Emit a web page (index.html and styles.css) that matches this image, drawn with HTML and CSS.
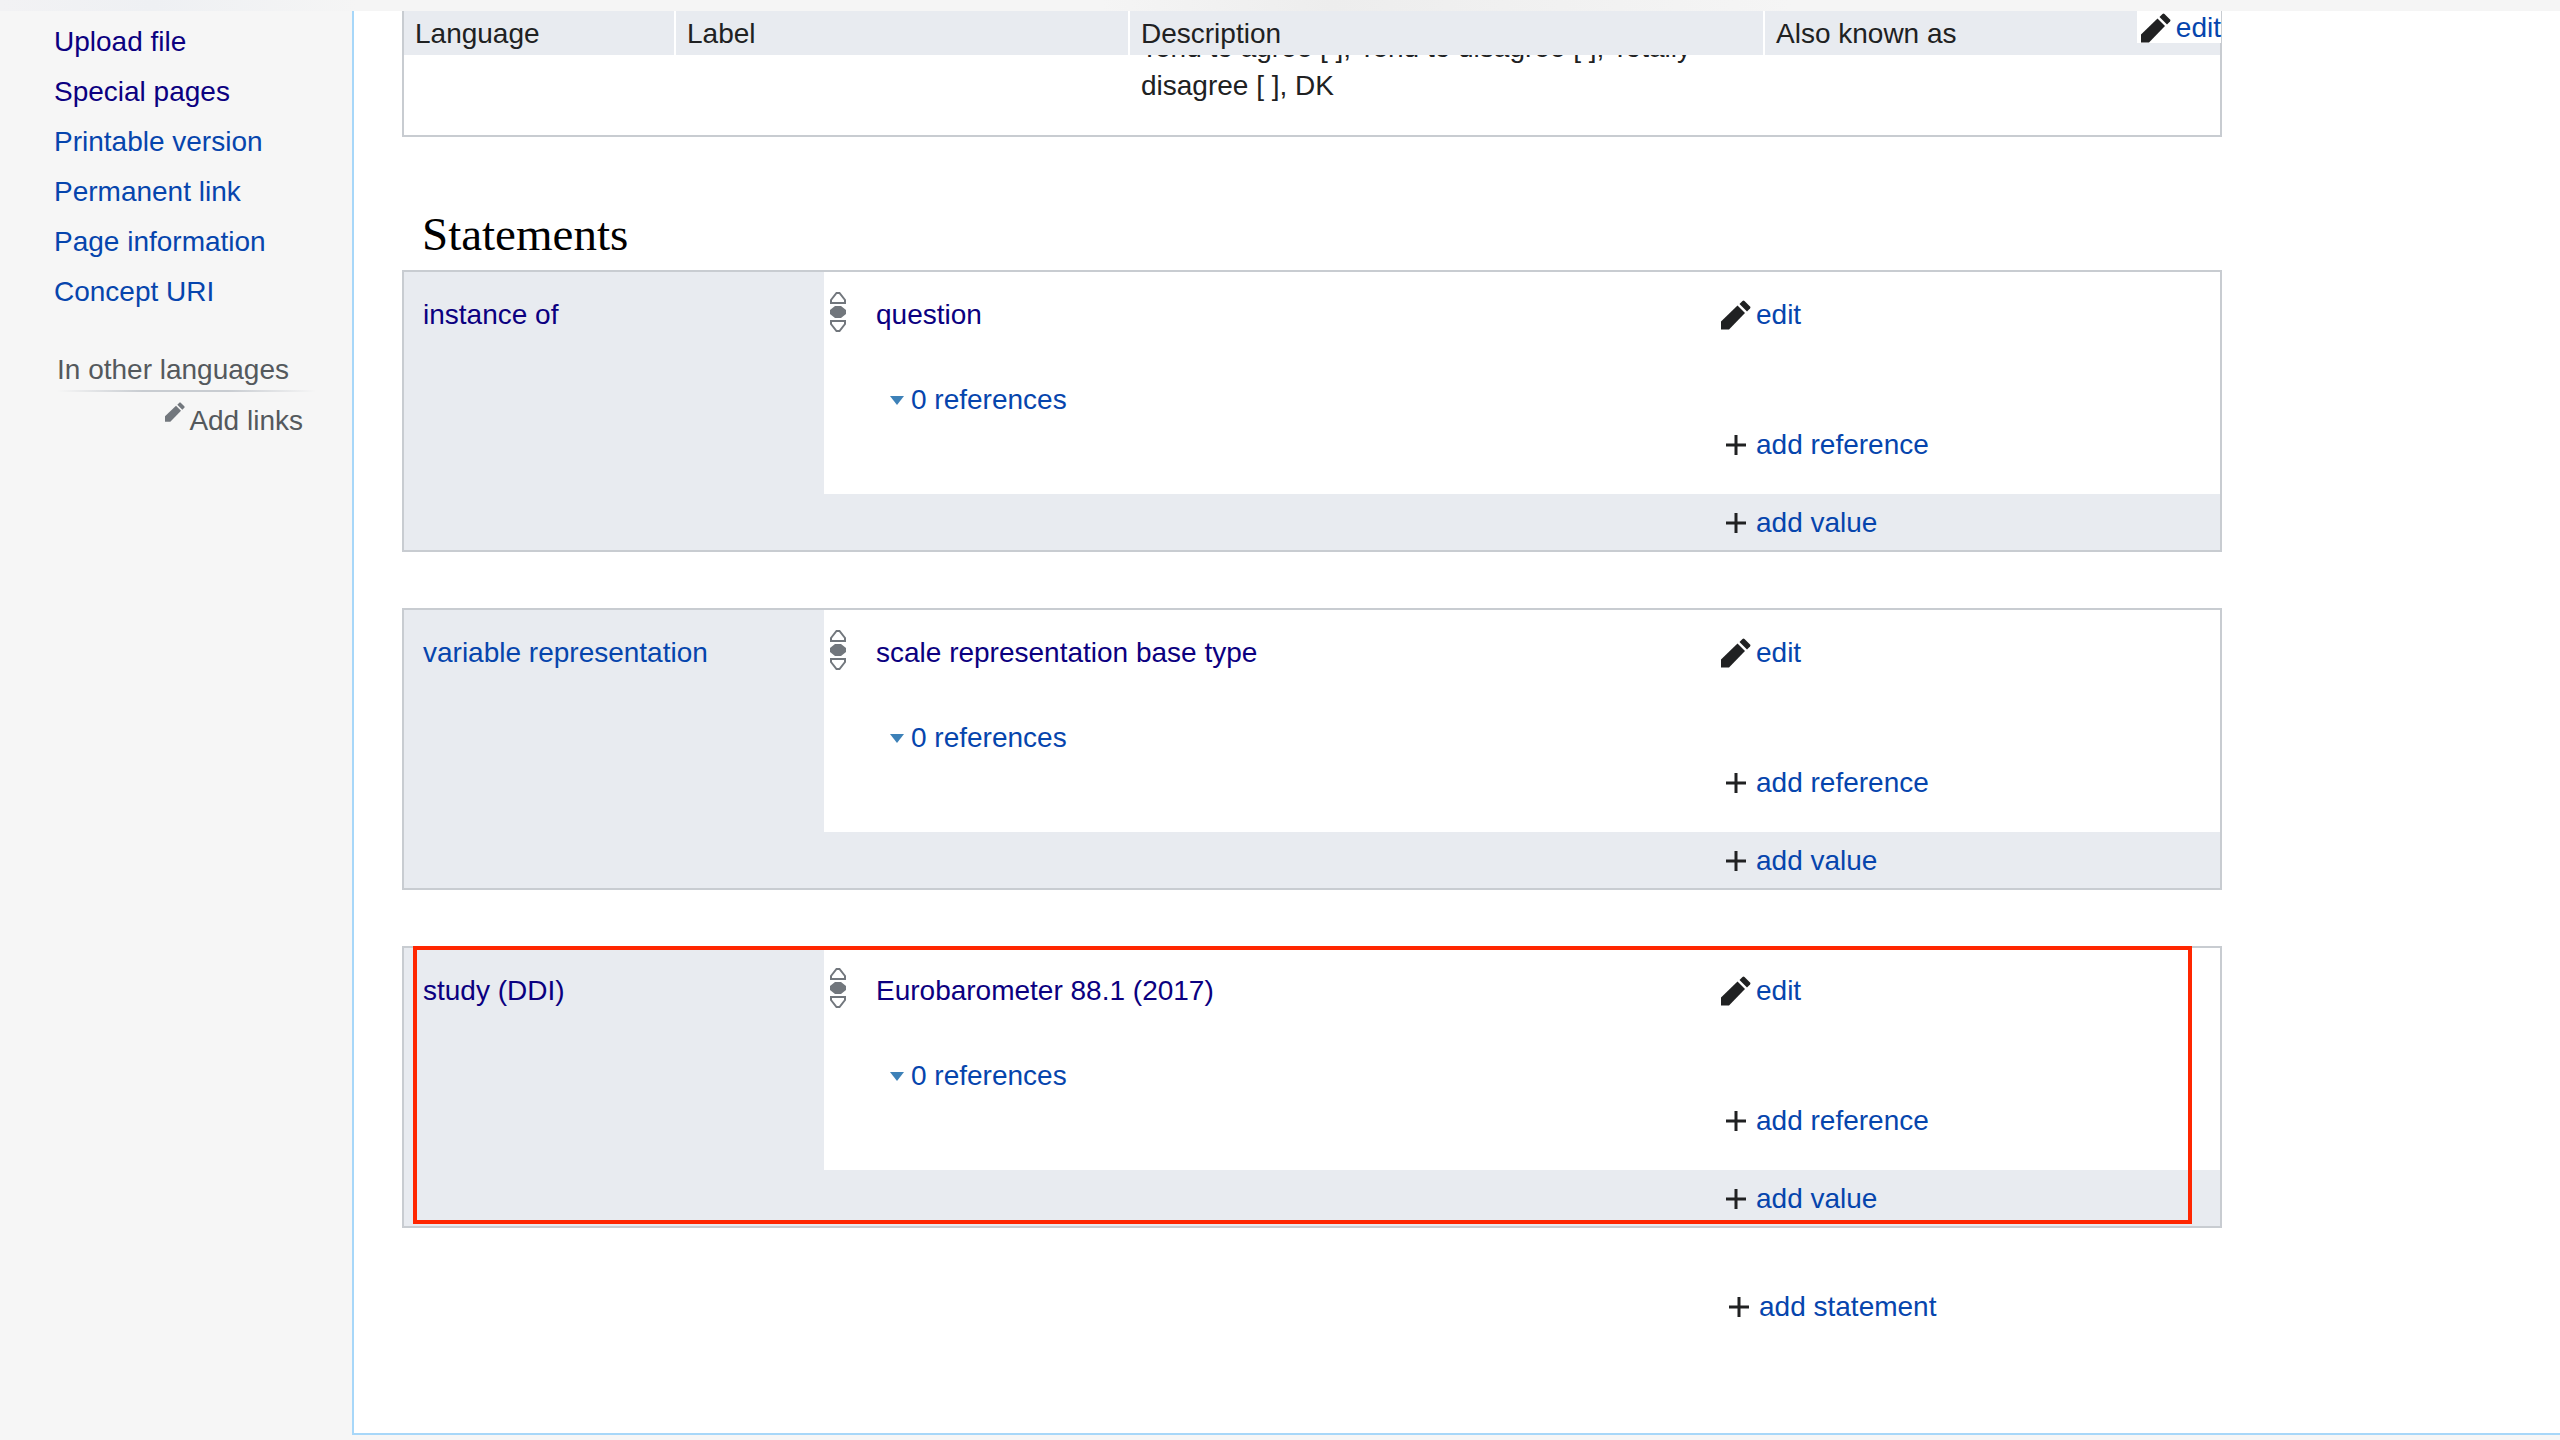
FILE: index.html
```html
<!DOCTYPE html>
<html lang="en">
<head>
<meta charset="utf-8">
<meta name="viewport" content="width=device-width, initial-scale=1">
<title>Item</title>
<link rel="stylesheet" href="styles.css">
</head>
<body>
<svg class="sprite" aria-hidden="true">
  <symbol id="pencil" viewBox="0 0 30 30">
    <path d="M0 29.500V21.500L16.500 5.500L24 13L8 29.500Z"/>
    <path d="M18.500 4L21.500 1Q22.500 0 23.500 1L29 6.500Q30 7.500 29 8.500L26 11.500Z"/>
  </symbol>
  <symbol id="plus" viewBox="0 0 20 20">
    <path d="M8.500 0h3v8.500H20v3h-8.500V20h-3v-8.500H0v-3h8.500z"/>
  </symbol>
  <symbol id="rank" viewBox="0 0 16 40">
    <path d="M6.500 1h3L15 8v3H1V8zM1 29h14v3l-5.500 7h-3L1 32z" fill="none" stroke="currentColor" stroke-width="2"/>
    <path d="M5 14h6l5 4v4l-5 4H5l-5-4v-4z"/>
  </symbol>
  <symbol id="caret" viewBox="0 0 14 9">
    <path d="M0 0h14L7 9z"/>
  </symbol>
</svg>
<header class="topbar"></header>
<div class="page">
  <nav class="sidebar">
    <ul class="tools">
      <li><a class="visited" href="#">Upload file</a></li>
      <li><a class="visited" href="#">Special pages</a></li>
      <li><a href="#">Printable version</a></li>
      <li><a href="#">Permanent link</a></li>
      <li><a href="#">Page information</a></li>
      <li><a href="#">Concept URI</a></li>
    </ul>
    <h3 class="side-heading">In other languages</h3>
    <a class="add-links" href="#"><svg class="icon-small"><use href="#pencil"/></svg>Add links</a>
  </nav>
  <main class="content">
    <section class="terms">
      <table class="terms-table">
        <colgroup><col class="col-language"><col class="col-label"><col class="col-description"><col></colgroup>
        <thead>
          <tr><th>Language</th><th>Label</th><th>Description</th><th>Also known as</th></tr>
        </thead>
        <tbody>
          <tr><td></td><td></td><td><p class="description">Tend to agree [ ], Tend to disagree [ ], Totally disagree [ ], DK</p></td><td></td></tr>
        </tbody>
      </table>
      <a class="action terms-edit" href="#"><svg class="icon-edit"><use href="#pencil"/></svg>edit</a>
    </section>

    <h2 class="section-title">Statements</h2>

    <div class="statements">
      <section class="statement">
        <div class="property"><a class="visited" href="#">instance of</a></div>
        <div class="value">
          <svg class="rank"><use href="#rank"/></svg>
          <div class="snak">
            <a class="visited" href="#">question</a>
            <a class="references" href="#"><svg class="caret"><use href="#caret"/></svg>0 references</a>
          </div>
        </div>
        <div class="actions">
          <a class="action" href="#"><svg class="icon-edit"><use href="#pencil"/></svg>edit</a>
          <a class="action" href="#"><svg class="icon-add"><use href="#plus"/></svg>add reference</a>
        </div>
        <div class="statement-footer">
          <a class="action" href="#"><svg class="icon-add"><use href="#plus"/></svg>add value</a>
        </div>
      </section>

      <section class="statement">
        <div class="property"><a href="#">variable representation</a></div>
        <div class="value">
          <svg class="rank"><use href="#rank"/></svg>
          <div class="snak">
            <a class="visited" href="#">scale representation base type</a>
            <a class="references" href="#"><svg class="caret"><use href="#caret"/></svg>0 references</a>
          </div>
        </div>
        <div class="actions">
          <a class="action" href="#"><svg class="icon-edit"><use href="#pencil"/></svg>edit</a>
          <a class="action" href="#"><svg class="icon-add"><use href="#plus"/></svg>add reference</a>
        </div>
        <div class="statement-footer">
          <a class="action" href="#"><svg class="icon-add"><use href="#plus"/></svg>add value</a>
        </div>
      </section>

      <section class="statement highlighted">
        <div class="property"><a class="visited" href="#">study (DDI)</a></div>
        <div class="value">
          <svg class="rank"><use href="#rank"/></svg>
          <div class="snak">
            <a class="visited" href="#">Eurobarometer 88.1 (2017)</a>
            <a class="references" href="#"><svg class="caret"><use href="#caret"/></svg>0 references</a>
          </div>
        </div>
        <div class="actions">
          <a class="action" href="#"><svg class="icon-edit"><use href="#pencil"/></svg>edit</a>
          <a class="action" href="#"><svg class="icon-add"><use href="#plus"/></svg>add reference</a>
        </div>
        <div class="statement-footer">
          <a class="action" href="#"><svg class="icon-add"><use href="#plus"/></svg>add value</a>
        </div>
      </section>
    </div>

    <div class="add-statement">
      <a class="action" href="#"><svg class="icon-add"><use href="#plus"/></svg>add statement</a>
    </div>
  </main>
</div>
</body>
</html>
```
FILE: styles.css
```css
* {
  box-sizing: border-box;
}

body {
  margin: 0;
  padding-bottom: 5px;
  background: #f6f6f6;
  color: #202122;
  font-family: "Liberation Sans", Arial, sans-serif;
  font-size: 28px;
  line-height: 38px;
}

a {
  color: #0645ad;
  text-decoration: none;
}

a:hover {
  text-decoration: underline;
}

.visited {
  color: #0b0080;
}

svg {
  display: block;
  flex: none;
  fill: currentColor;
}

.sprite {
  position: absolute;
  width: 0;
  height: 0;
}

.topbar {
  height: 11px;
  background: linear-gradient(to right, #f2f2f4 0%, #eef0f3 6%, #f5f5f5 14%, #f5f5f5 43%, #ededed 52%, #f5f5f5 70%);
}

.page {
  display: grid;
  grid-template-columns: 352px 1fr;
}

/* Sidebar */

.sidebar {
  padding: 6px 36px 0 54px;
}

.tools {
  margin: 0;
  padding: 0;
  list-style: none;
  line-height: 50px;
}

.side-heading {
  margin: 34px 0 9px 3px;
  padding-bottom: 3px;
  background: linear-gradient(to right, transparent, #c8ccd1 33%, #c8ccd1 66%, transparent) bottom / 100% 2px no-repeat;
  color: #54595d;
  font-size: 28px;
  font-weight: 400;
}

.add-links {
  display: flex;
  justify-content: flex-end;
  gap: 4px;
  padding: 1px 13px 0 0;
  color: #54595d;
}

.icon-small {
  width: 20px;
  height: 20px;
  color: #72777d;
}

/* Content */

.content {
  padding: 0 338px 107px 48px;
  border-left: 2px solid #a7d7f9;
  border-bottom: 2px solid #a7d7f9;
  background: #fff;
}

.terms {
  position: relative;
  border: 2px solid #c8ccd1;
  border-top: 0;
}

.terms-table {
  width: 100%;
  table-layout: fixed;
  border-spacing: 0;
}

.col-language {
  width: 272px;
}

.col-label {
  width: 454px;
}

.col-description {
  width: 635px;
}

.terms-table th {
  position: relative;
  z-index: 1;
  padding: 4px 11px 2px;
  border-right: 2px solid #fff;
  background: #e8ebf0;
  font-weight: 400;
  text-align: left;
}

.terms-table th:last-child {
  border-right: 0;
}

.terms-table td {
  padding: 0 11px 30px;
  vertical-align: top;
}

/* The text has scrolled partly under the sticky header row. */
.description {
  margin: -26px 0 0;
}

.terms-edit {
  position: absolute;
  z-index: 2;
  top: 0;
  right: -1px;
  height: 32px;
  padding: 2px 0 0 4px;
  background: #fff;
  line-height: 32px;
}

.section-title {
  margin: 61px 0 0;
  padding-left: 20px;
  color: #000;
  font-family: Georgia, "Liberation Serif", serif;
  font-size: 47px;
  font-weight: 400;
  line-height: 72px;
}

.statements {
  display: grid;
  gap: 56px;
}

.statement {
  position: relative;
  display: grid;
  grid-template-columns: 420px 1fr 500px;
  border: 2px solid #c8ccd1;
}

.property {
  grid-row: span 2;
  padding: 24px 19px;
  background: #e8ebf0;
}

.value {
  display: flex;
  gap: 30px;
  padding: 20px 6px;
}

.rank {
  width: 16px;
  height: 40px;
  color: #72777d;
}

.snak {
  display: grid;
  align-content: start;
  justify-items: start;
  gap: 47px;
  padding-top: 4px;
}

.references {
  display: flex;
  align-items: center;
  gap: 7px;
  margin-left: 14px;
}

.caret {
  width: 14px;
  height: 9px;
  color: #3d81b8;
}

.actions {
  display: grid;
  align-content: start;
  justify-items: start;
  gap: 92px;
  padding: 24px 0 30px 1px;
}

.action {
  display: flex;
  align-items: center;
  gap: 5px;
}

.icon-edit {
  width: 30px;
  height: 30px;
  color: #202122;
}

.icon-add {
  width: 20px;
  height: 20px;
  margin: 0 5px;
  color: #202122;
}

.statement-footer {
  grid-column: 2 / -1;
  display: grid;
  grid-template-columns: 499px;
  justify-content: end;
  padding: 10px 0 8px;
  background: #e8ebf0;
}

/* Red annotation frame over the statement. */
.highlighted::after {
  content: "";
  position: absolute;
  inset: -2px 28px 2px 9px;
  border: 4px solid #ff2600;
  pointer-events: none;
}

.add-statement {
  display: grid;
  grid-template-columns: 498px;
  justify-content: end;
  padding-top: 60px;
}
```
